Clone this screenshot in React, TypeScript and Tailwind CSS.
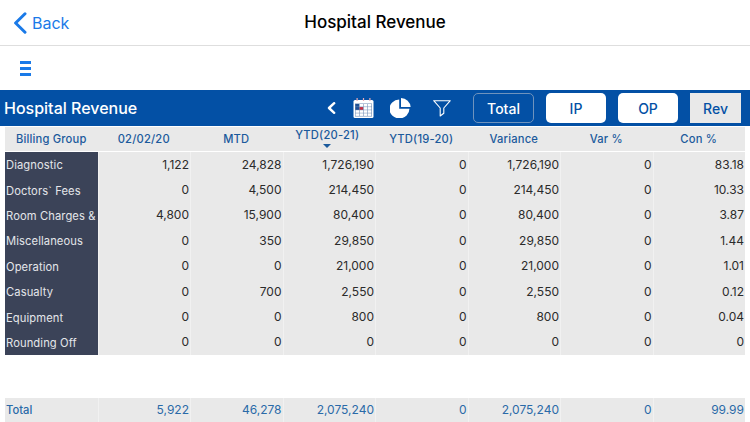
const columns = ["Billing Group", "02/02/20", "MTD", "YTD(20-21)", "YTD(19-20)", "Variance", "Var %", "Con %"];

const rows = [
  ["Diagnostic", "1,122", "24,828", "1,726,190", "0", "1,726,190", "0", "83.18"],
  ["Doctors` Fees", "0", "4,500", "214,450", "0", "214,450", "0", "10.33"],
  ["Room Charges &", "4,800", "15,900", "80,400", "0", "80,400", "0", "3.87"],
  ["Miscellaneous", "0", "350", "29,850", "0", "29,850", "0", "1.44"],
  ["Operation", "0", "0", "21,000", "0", "21,000", "0", "1.01"],
  ["Casualty", "0", "700", "2,550", "0", "2,550", "0", "0.12"],
  ["Equipment", "0", "0", "800", "0", "800", "0", "0.04"],
  ["Rounding Off", "0", "0", "0", "0", "0", "0", "0"],
];

const total = ["Total", "5,922", "46,278", "2,075,240", "0", "2,075,240", "0", "99.99"];

const gridCols = "grid grid-cols-[repeat(8,92.5px)]";

function CalendarIcon() {
  return (
    <svg width="21" height="20" viewBox="0 0 21 20" className="block">
      <rect x="0.5" y="2" width="20" height="18" rx="1.5" fill="#fff" />
      <rect x="2" y="5.5" width="17" height="13" fill="#6f8db5" />
      {[0, 1, 2, 3].map((r) =>
        [0, 1, 2, 3].map((c) => (
          <rect
            key={`${r}-${c}`}
            x={2.5 + c * 4.1}
            y={6 + r * 3.1}
            width="3.6"
            height="2.6"
            fill={r === 1 && c === 1 ? "#c62f45" : c === 0 && r < 2 ? "#1f4f93" : "#fff"}
          />
        ))
      )}
      <rect x="3.5" y="0" width="1.2" height="3" fill="#e8a9b4" />
      <rect x="9.9" y="0" width="1.2" height="3" fill="#e8a9b4" />
      <rect x="16.3" y="0" width="1.2" height="3" fill="#e8a9b4" />
    </svg>
  );
}

function PieIcon() {
  return (
    <svg width="21" height="20" viewBox="0 0 21 20" className="block">
      <path d="M9.2 1.6 V10.8 H19.4 A10 9.4 0 1 1 9.2 1.6 Z" fill="#fff" />
      <path d="M11 0 A9.8 9.4 0 0 1 20.6 9 H11 Z" fill="#fff" />
    </svg>
  );
}

export default function App() {
  return (
    <div className="w-[750px] h-[422px] overflow-hidden bg-white font-['Inter',sans-serif]">
      {/* nav */}
      <div className="relative h-[46px] flex items-center border-b border-[#dedede]">
        <div className="flex items-center pl-[13px] text-[#1a7ae8]">
          <svg width="14" height="22" viewBox="0 0 14 22" className="block">
            <path d="M12 1.8 L2.6 11 L12 20.2" fill="none" stroke="currentColor" strokeWidth="3" strokeLinecap="round" strokeLinejoin="round" />
          </svg>
          <span className="text-[16px] ml-[5px] pt-[1px]">Back</span>
        </div>
        <div className="absolute inset-0 pt-[1px] flex items-center justify-center text-[17px] font-medium text-black">
          Hospital Revenue
        </div>
      </div>

      {/* menu row */}
      <div className="h-[44px] flex items-center pl-[20px]">
        <div className="flex flex-col gap-[3px]">
          <div className="w-[11px] h-[3px] bg-[#1a7ae8]" />
          <div className="w-[11px] h-[3px] bg-[#1a7ae8]" />
          <div className="w-[11px] h-[3px] bg-[#1a7ae8]" />
        </div>
      </div>

      {/* blue toolbar */}
      <div className="h-[36px] bg-[#0350a5] flex items-center pl-[4px] text-white">
        <div className="w-[323px] text-[16px] font-medium">Hospital Revenue</div>
        <svg width="9" height="12" viewBox="0 0 9 12" className="block">
          <path d="M7.2 1.2 L2 6 L7.2 10.8" fill="none" stroke="#fff" strokeWidth="2.4" strokeLinecap="round" strokeLinejoin="round" />
        </svg>
        <div className="ml-[17px]"><CalendarIcon /></div>
        <div className="ml-[16px]"><PieIcon /></div>
        <div className="ml-[22px]">
          <svg width="18" height="17" viewBox="0 0 18 17" className="block">
            <path d="M0.7 0.7 H17.3 L10.8 8 V13.2 L7.2 16 V8 Z" fill="none" stroke="#fff" strokeWidth="1.1" strokeLinejoin="round" />
          </svg>
        </div>
        <div className="ml-[22px] w-[61px] h-[30px] rounded-[5px] border border-[#6f93bd] flex items-center justify-center text-[14px] font-medium">
          Total
        </div>
        <div className="ml-[12px] w-[60px] h-[30px] rounded-[5px] bg-white text-[#0350a5] flex items-center justify-center text-[14px] font-medium">
          IP
        </div>
        <div className="ml-[12px] w-[60px] h-[30px] rounded-[5px] bg-white text-[#0350a5] flex items-center justify-center text-[14px] font-medium">
          OP
        </div>
        <div className="ml-[12px] w-[51px] h-[30px] bg-[#e9e9e9] text-[#0350a5] flex items-center justify-center text-[14px] font-medium">
          Rev
        </div>
      </div>

      {/* table */}
      <div className="ml-[5px] mt-[1px] w-[740px]">
        <div className={`${gridCols} h-[25px] bg-[#e9e9e9] border-b border-white text-[11.2px] font-medium text-[#1b5a9c] tracking-[0.2px]`}>
          {columns.map((c) => (
            <div key={c} className="relative flex items-center justify-center">
              {c === "YTD(20-21)" ? (
                <div className="flex flex-col items-center -mt-[7px] -ml-[3px]">
                  <span>{c}</span>
                  <span className="absolute top-[17px] w-0 h-0 border-x-[4px] border-x-transparent border-t-[4px] border-t-[#1b5a9c]" />
                </div>
              ) : (
                c
              )}
            </div>
          ))}
        </div>

        {rows.map((row) => (
          <div key={row[0]} className={`${gridCols} h-[25.4px] text-[12px] text-[#2b2b2b]`}>
            {row.map((cell, i) =>
              i === 0 ? (
                <div key={i} className="bg-[#3b4358] text-[#e4e6ea] text-[11.2px] tracking-[0.1px] flex items-center pl-[1px] pt-[2px] whitespace-nowrap">
                  {cell}
                </div>
              ) : (
                <div key={i} className="bg-[#e9e9e9] border-l border-[#f1f1f1] flex items-center justify-end pr-[1px]">
                  {cell}
                </div>
              )
            )}
          </div>
        ))}

        <div className={`${gridCols} h-[24px] mt-[43px] bg-[#e9e9e9] text-[12px] text-[#2a6aa8]`}>
          {total.map((cell, i) => (
            <div key={i} className={i === 0 ? "flex items-center pl-[1px] text-[11.2px] font-medium" : "border-l border-[#f1f1f1] flex items-center justify-end pr-[1px]"}>
              {cell}
            </div>
          ))}
        </div>
      </div>
    </div>
  );
}
